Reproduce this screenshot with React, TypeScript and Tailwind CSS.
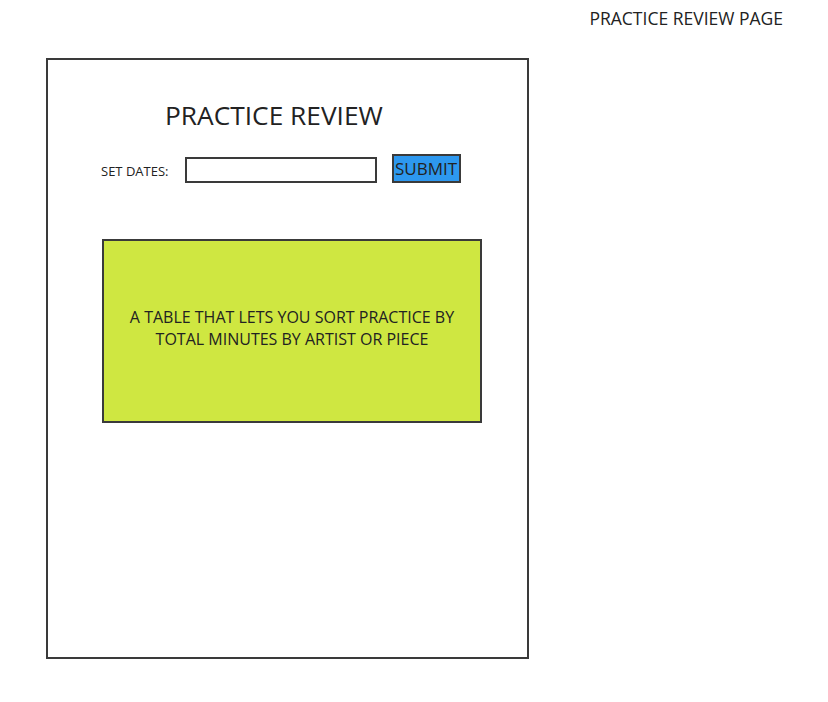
export default function App() {
  return (
    <div className="w-[828px] h-[702px] bg-white text-[#222] font-['Open_Sans',sans-serif]">
      {/* page caption */}
      <div className="flex justify-end pt-[7px] pr-[45px]">
        <span className="text-[17.5px] leading-[23px]">PRACTICE REVIEW PAGE</span>
      </div>

      {/* wireframe frame */}
      <div className="ml-[46px] mt-[28px] w-[483px] h-[601px] border-2 border-[#3a3a3a] flex flex-col">
        <h1 className="mt-[37px] ml-[117px] text-[26.3px] leading-[36px]">PRACTICE REVIEW</h1>

        <div className="mt-[21px] ml-[53px] flex items-start">
          <span className="w-[84px] mt-[9px] text-[13px] leading-[16px]">SET DATES:</span>
          <input
            type="text"
            className="mt-[3px] w-[192px] h-[26px] border-2 border-[#3a3a3a] bg-white outline-none"
          />
          <button className="ml-[15px] w-[69px] h-[29px] border-2 border-[#3a3a3a] bg-[#2d98ef] pl-[1px] text-left text-[17px] leading-[22px]">
            SUBMIT
          </button>
        </div>

        <div className="mt-[56px] ml-[54px] w-[380px] h-[184px] border-2 border-[#3a3a3a] bg-[#cfe741] flex items-center justify-center pb-[6px] text-center text-[16px] leading-[22px]">
          <p>
            A TABLE THAT LETS YOU SORT PRACTICE BY
            <br />
            TOTAL MINUTES BY ARTIST OR PIECE
          </p>
        </div>
      </div>
    </div>
  );
}
